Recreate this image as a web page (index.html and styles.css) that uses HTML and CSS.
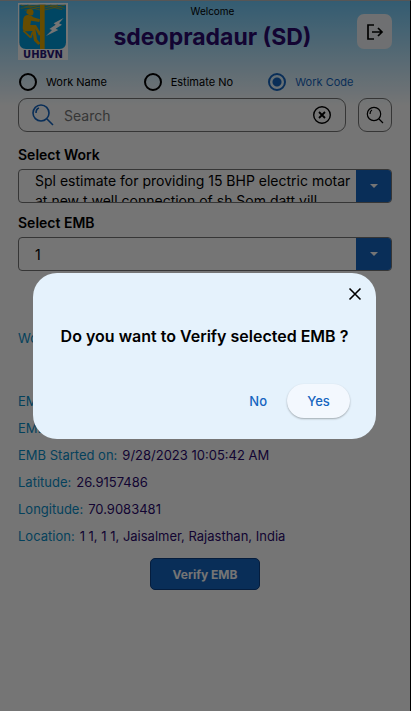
FILE: index.html
```html
<!DOCTYPE html>
<html lang="en">
<head>
<meta charset="utf-8">
<meta name="viewport" content="width=device-width, initial-scale=1">
<title>Verify EMB</title>
<link rel="stylesheet" href="styles.css">
</head>
<body>
<main class="page">
  <header class="header">
    <svg class="logo" viewBox="0 0 150 171" role="img" aria-label="UHBVN logo">
      <rect width="150" height="171" fill="#fff"/>
      <path d="M4 5H144V118Q144 138 124 138H24Q4 138 4 118Z" fill="#0098d8"/>
      <path d="M8 6L66 21M28 6L66 15M8 16L66 6M20 22L66 12M80 21L142 6M80 15L120 6M80 6L132 20M96 6L140 16" stroke="#d9a600" stroke-width="2" fill="none"/>
      <path d="M66 5H80V138H66Z" fill="#e0a500"/>
      <path d="M25 29Q25 18 36 17Q46 18 47 28L45 35Q37 39 29 34Z" fill="#e0a500"/>
      <path d="M29 36Q19 36 16 47L14 76Q15 84 25 85L43 84L48 113L61 126L67 121L57 109L52 77L63 98L70 93L54 66L37 66L39 53L64 57L66 49L46 43Q40 35 29 36Z" fill="#e0a500"/>
      <path d="M16 83L38 104M38 104L44 86" stroke="#e0a500" stroke-width="5" fill="none"/>
      <path d="M137 45L107 61L113 65L94 78L102 81L84 99L121 81L113 77L132 65L123 61Z" fill="#fff"/>
      <text class="logo-text" x="75" y="165" text-anchor="middle">UHBVN</text>
    </svg>
    <div class="titles">
      <p class="welcome">Welcome</p>
      <h1 class="user">sdeopradaur (SD)</h1>
    </div>
    <button class="logout" type="button" aria-label="Log out">
      <svg width="20" height="20" viewBox="0 0 20 20" fill="none" stroke="#000" stroke-width="1.7"><path d="M9 3H3V17H9M7 10H17M13 6L17 10L13 14"/></svg>
    </button>
  </header>

  <form class="form">
    <div class="radios">
      <label class="radio"><input type="radio" name="by">Work Name</label>
      <label class="radio"><input type="radio" name="by">Estimate No</label>
      <label class="radio"><input type="radio" name="by" checked>Work Code</label>
    </div>
    <div class="search-row">
      <div class="search-box">
        <svg width="22" height="22" viewBox="0 0 22 22" fill="none" stroke="#1565c0" stroke-width="1.6"><circle cx="9" cy="9" r="8"/><path d="M15 15L21 21M4 9Q4 5 7 4"/></svg>
        <input type="text" placeholder="Search" aria-label="Search">
        <button class="clear" type="button" aria-label="Clear search">
          <svg width="20" height="20" viewBox="0 0 20 20" fill="none" stroke="#000"><circle cx="10" cy="10" r="8.3" stroke-width="1.4"/><path d="M7 7L13 13M13 7L7 13" stroke-width="1.8"/></svg>
        </button>
      </div>
      <button class="search-go" type="button" aria-label="Run search">
        <svg width="18" height="18" viewBox="0 0 18 18" fill="none" stroke="#000" stroke-width="1.2"><circle cx="8" cy="8" r="6.7"/><path d="M13 13L17 17M4 8Q4 5 6 4"/></svg>
      </button>
    </div>

    <label class="label" for="work">Select Work</label>
    <div class="picker">
      <select class="wrapped" id="work"><option>Spl estimate for providing 15 BHP electric motar at new t well connection of sh Som datt vill</option></select>
      <span class="value" aria-hidden="true">Spl estimate for providing 15 BHP electric motar at new t well connection of sh Som datt vill</span>
      <span class="arrow"></span>
    </div>

    <label class="label" for="emb">Select EMB</label>
    <div class="picker">
      <select id="emb"><option>1</option></select>
      <span class="arrow"></span>
    </div>
  </form>

  <dl class="details">
    <div class="row work"><dt>Work:</dt></div>
    <div class="row"><dt>EMB:</dt></div>
    <div class="row"><dt>EMB:</dt></div>
    <div class="row"><dt>EMB Started on:</dt><dd>9/28/2023 10:05:42 AM</dd></div>
    <div class="row"><dt>Latitude:</dt><dd>26.9157486</dd></div>
    <div class="row"><dt>Longitude:</dt><dd>70.9083481</dd></div>
    <div class="row"><dt>Location:</dt><dd>1 1, 1 1, Jaisalmer, Rajasthan, India</dd></div>
  </dl>
  <button class="verify" type="button">Verify EMB</button>
</main>

<div class="scrim">
  <section class="dialog" role="dialog" aria-modal="true" aria-labelledby="question">
    <button class="close" type="button" aria-label="Close">
      <svg width="14" height="14" viewBox="0 0 14 14" fill="none" stroke="#000" stroke-width="1.6"><path d="M1.5 1.5L12.5 12.5M12.5 1.5L1.5 12.5"/></svg>
    </button>
    <h2 class="question" id="question">Do you want to Verify selected EMB ?</h2>
    <div class="actions">
      <button class="no" type="button">No</button>
      <button class="yes" type="button">Yes</button>
    </div>
  </section>
</div>
</body>
</html>
```
FILE: styles.css
```css
* { box-sizing: border-box; }
body {
  margin: 0;
  font-family: Inter, "Liberation Sans", sans-serif;
  font-size: 14px;
  color: #000;
}
button, input, select { font: inherit; color: inherit; }
button { padding: 0; border: 0; background: none; }
h1, h2, p, dl, dd { margin: 0; }
svg { display: block; }

.page {
  min-height: 100vh;
  padding: 0 18px;
  border-top: 1px solid #bbb;
  border-right: 1px solid #000;
  background: linear-gradient(#71c9f8, #fff 105px);
}

.header {
  display: grid;
  grid-template-columns: 50px 1fr 35px;
  align-items: start;
  padding-top: 2px;
  height: 70px;
}
.logo { width: 50px; height: 57px; }
.logo-text { font: bold 30px "DejaVu Sans", sans-serif; fill: #2a1a7a; }
.titles { text-align: center; }
.welcome { font-size: 10px; line-height: 16px; }
.user { margin-top: 4px; font-size: 23px; line-height: 28px; color: #2b0a6e; }
.logout {
  display: grid;
  place-items: center;
  height: 35px;
  margin-top: 11px;
  border-radius: 7px;
  background: #f1f5f8;
}

.radios { display: grid; grid-template-columns: repeat(3, 1fr); height: 22px; align-items: center; }
.radio { display: flex; align-items: center; gap: 9px; font-size: 11px; }
.radio input {
  appearance: none;
  width: 18px;
  height: 18px;
  margin: 0 0 0 1px;
  border: 2px solid #000;
  border-radius: 50%;
}
.radio:has(:checked) { color: #1565c0; }
.radio input:checked {
  border-color: #1565c0;
  background: radial-gradient(#1565c0 4px, transparent 5px);
}

.search-row { display: flex; gap: 12px; margin: 5px 0 14px; }
.search-box {
  display: flex;
  flex: 1;
  align-items: center;
  min-width: 0;
  height: 34px;
  padding: 0 13px;
  border: 1px solid #777;
  border-radius: 9px;
}
.search-box input {
  flex: 1;
  min-width: 0;
  padding: 0 10px;
  border: 0;
  background: none;
}
.search-box input::placeholder { color: #777; opacity: 1; }
.search-go {
  display: grid;
  place-items: center;
  width: 34px;
  height: 34px;
  border: 1px solid #777;
  border-radius: 9px;
}

.label {
  display: block;
  margin: 11px 0 5px;
  font-weight: 600;
  line-height: 18px;
}
.picker {
  display: grid;
  grid-template-columns: 1fr 35px;
  height: 34px;
  border: 1px solid #777;
  border-radius: 4px;
  overflow: hidden;
}
.picker select {
  grid-area: 1 / 1 / 2 / 3;
  width: 100%;
  padding: 0 16px;
  border: 0;
  appearance: none;
  background: none;
}
.picker .wrapped { color: transparent; }
.value {
  grid-area: 1 / 1;
  height: 32px;
  padding: 1px 0 0 16px;
  line-height: 20px;
  overflow: hidden;
  pointer-events: none;
}
.arrow {
  grid-area: 1 / 2;
  display: grid;
  place-items: center;
  background: #1565c0;
  pointer-events: none;
}
.arrow::before {
  content: "";
  border: 4px solid transparent;
  border-top-color: #fff;
  border-bottom: 0;
}

.details { margin-top: 53px; font-size: 13px; }
.row { display: flex; gap: 5px; height: 27px; align-items: center; }
.work { margin-bottom: 36px; }
.row dt { color: #0a8fc9; }
.row dd { color: #2b0a6e; }
.verify {
  display: block;
  width: 110px;
  height: 32px;
  margin: 9px auto 0;
  border: 1px solid #0b3f85;
  border-radius: 5px;
  background: #1565c0;
  color: #fff;
  font-size: 12px;
  font-weight: 700;
}

.scrim {
  position: fixed;
  inset: 0;
  display: grid;
  align-items: center;
  padding: 0 35px 0 33px;
  background: rgb(0 0 0 / 54%);
}
.dialog {
  display: flex;
  flex-direction: column;
  padding: 14px 14px 21px;
  border-radius: 24px;
  background: #e5f2fc;
}
.close { align-self: flex-end; }
.question {
  margin: 25px 0 38px;
  font-size: 16px;
  font-weight: 600;
  line-height: 20px;
  text-align: center;
}
.actions {
  display: flex;
  justify-content: flex-end;
  gap: 20px;
  padding-right: 12px;
  font-size: 13px;
  color: #1565c0;
}
.actions button { font-weight: 500; }
.yes {
  width: 63px;
  height: 34px;
  border-radius: 17px;
  background: #f3f8fe;
  box-shadow: 0 1px 2px rgb(0 0 0 / 30%);
}
```
